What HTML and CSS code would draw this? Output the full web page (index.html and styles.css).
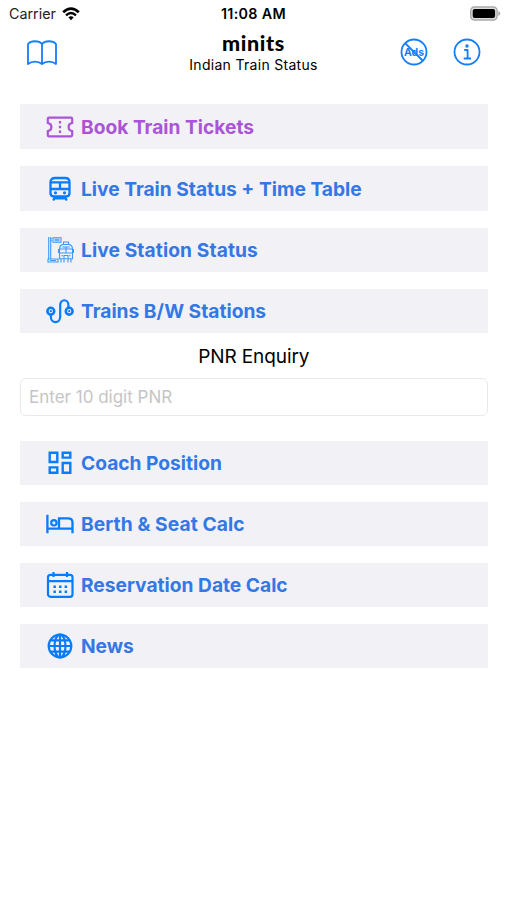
FILE: index.html
```html
<!DOCTYPE html>
<html lang="en">
<head>
  <meta charset="UTF-8" />
  <meta name="viewport" content="width=device-width, initial-scale=1" />
  <title>minits - Indian Train Status</title>
  <link rel="stylesheet" href="styles.css">
</head>
<body>
  <div class="status-bar">
    <div class="carrier">
      <span>Carrier</span>
      <svg class="wifi" viewBox="0 0 18 14">
        <path d="M1.2 5.2 Q9-2 16.8 5.2" fill="none" stroke="#000" stroke-width="2.6"/>
        <path d="M4 8.3 Q9 3.8 14 8.3" fill="none" stroke="#000" stroke-width="2.4"/>
        <path d="M6.3 10.3 Q9 8.2 11.7 10.3 L9 13.2Z"/>
      </svg>
    </div>
    <div class="time">11:08 AM</div>
    <svg class="battery" viewBox="0 0 32 16">
      <rect x="1.7" y="1" width="26.4" height="13" rx="3.8" fill="#ddd" stroke="#aaa" stroke-width="1.4"/>
      <rect x="3.7" y="3" width="22.4" height="9" rx="2"/>
      <path d="M29.3 5 Q31.3 5.8 31.3 7.5 Q31.3 9.2 29.3 10Z" fill="#aaa"/>
    </svg>
  </div>

  <header>
    <svg class="book" viewBox="0 0 32 26">
      <path d="M16 4 C13 .3 5 .3 2 4 V24 C6 20.8 12 20.8 16 24 C20 20.8 26 20.8 30 24 V4 C27 .3 19 .3 16 4 V24"/>
    </svg>
    <div class="title">
      <h1>minits</h1>
      <p>Indian Train Status</p>
    </div>
    <div class="actions">
      <svg viewBox="0 0 28 28">
        <text class="ads" x="14" y="17.7" text-anchor="middle">Ads</text>
        <circle cx="14" cy="14" r="12.5"/>
        <path d="M5 5 L23 23"/>
      </svg>
      <svg viewBox="0 0 28 28">
        <circle cx="14" cy="14" r="12.5"/>
        <circle class="fill" cx="14" cy="8" r="1.7"/>
        <path d="M11.2 12 H14.6 V20.3 M10.7 20.5 H18"/>
      </svg>
    </div>
  </header>

  <main>
    <a class="menu-item tickets">
      <svg viewBox="0 0 28 28">
        <path d="M3 4.7 H25 Q26.2 4.7 26.2 6 V9.8 Q22.6 10.5 22.6 14 Q22.6 17.5 26.2 18.2 V22 Q26.2 23.3 25 23.3 H3 Q1.8 23.3 1.8 22 V18.2 Q5.4 17.5 5.4 14 Q5.4 10.5 1.8 9.8 V6 Q1.8 4.7 3 4.7Z"/>
        <path d="M14 8 v2.6 M14 12.7 v2.6 M14 17.4 v2.6"/>
      </svg>
      <span>Book Train Tickets</span>
    </a>
    <a class="menu-item">
      <svg viewBox="0 0 28 28">
        <path stroke-width="2.3" d="M9 3 H19 Q23.5 3 23.5 7 V18 Q23.5 21.5 20 21.5 H8 Q4.5 21.5 4.5 18 V7 Q4.5 3 9 3Z M5 7.4 H23 M5 14 H23 M14 7 V14 M9 22 L7.2 25.5 M19 22 L20.8 25.5 M8 23.3 H20"/>
        <circle class="fill" cx="9.5" cy="17.8" r="1.6"/>
        <circle class="fill" cx="18.5" cy="17.8" r="1.6"/>
      </svg>
      <span>Live Train Status + Time Table</span>
    </a>
    <a class="menu-item short">
      <svg class="thin" viewBox="0 0 28 28">
        <path d="M2.7 1 V23 M4.7 1 V23 M5 2.8 H6 M5 4.7 H6 M7 1.7 H15 V6.3 H7Z M8.5 3.3 H13.5 M8.5 4.7 H13.5 M2 23 H12 V26 H2Z M4 24.5 H10"/>
        <path d="M16.5 8.5 H23.5 Q26.5 9.5 26.5 13 V22.8 H13.5 V13 Q13.5 9.5 16.5 8.5Z M14 13 H26 M20 11 V17 M14 17 H26 M16.3 11 H23.7 M17.5 8 V6 H22.5 V8 M12.5 13 V17 M27.5 13 V17 M15 22.8 V26.5 M18 23 V26.5 M22 23 V26.5 M25 22.8 V26.5"/>
        <path d="M15.4 19.8 H17 M23 19.8 H24.6 M18 22 V19.5 H22 V22"/>
      </svg>
      <span class="wide">Live Station Status</span>
    </a>
    <a class="menu-item short">
      <svg viewBox="0 0 28 28">
        <circle cx="4.8" cy="14.2" r="3.4" stroke-width="2.6"/>
        <circle cx="23.2" cy="14.2" r="3.4" stroke-width="2.6"/>
        <path stroke-width="2.2" d="M4.8 17.5 V19.5 C4.8 27 14.2 27 14.2 19.5 V8.5 C14.2 1.5 22.4 1.5 22.4 8.5 V10.5"/>
        <circle class="fill" cx="4.8" cy="14.2" r="1.1"/>
        <circle class="fill" cx="23.2" cy="14.2" r="1.1"/>
      </svg>
      <span>Trains B/W Stations</span>
    </a>

    <section class="pnr">
      <label for="pnrInput">PNR Enquiry</label>
      <input type="text" id="pnrInput" placeholder="Enter 10 digit PNR" />
    </section>

    <a class="menu-item short">
      <svg viewBox="0 0 28 28">
        <path stroke-width="2.4" d="M3.7 3.7 H11.3 V13 H3.7Z M16.7 3.7 H24.3 V8.6 H16.7Z M3.7 18.4 H11.3 V23.7 H3.7Z M16.7 14 H24.3 V23.7 H16.7Z"/>
      </svg>
      <span>Coach Position</span>
    </a>
    <a class="menu-item short">
      <svg viewBox="0 0 28 28">
        <path stroke-width="2.3" d="M1.4 4.8 V23.2 M1.4 18.7 H26.6 M13 18.5 V8.4 H22 Q26.5 8.4 26.5 12.5 V23.2"/>
        <circle cx="7.9" cy="12.8" r="2.7"/>
      </svg>
      <span class="wide">Berth &amp; Seat Calc</span>
    </a>
    <a class="menu-item short">
      <svg viewBox="0 0 28 28">
        <rect x="2" y="3.8" width="24.5" height="22" rx="2.5"/>
        <path d="M2 10.2 H26.5 M7.5 1 V6 M21 1 V6"/>
        <path stroke-width="2.4" stroke-dasharray="2.5 3.1" d="M7.4 15.8 H21.3 M7.4 20.8 H21.3"/>
      </svg>
      <span>Reservation Date Calc</span>
    </a>
    <a class="menu-item short">
      <svg viewBox="0 0 28 28">
        <circle cx="14" cy="14" r="11.3"/>
        <ellipse cx="14" cy="14" rx="5.5" ry="11.3"/>
        <path d="M14 2.7 V25.3 M2.7 14 H25.3 M4.5 8.3 H23.5 M4.5 19.7 H23.5"/>
      </svg>
      <span>News</span>
    </a>
  </main>
</body>
</html>
```
FILE: styles.css
```css
* {
  box-sizing: border-box;
}

body {
  margin: 0;
  min-height: 100vh;
  background: #fff;
  color: #000;
  font-family: Inter, sans-serif;
}

.status-bar {
  display: grid;
  grid-template-columns: 1fr auto 1fr;
  align-items: center;
  height: 27px;
  padding: 0 6px 0 9px;
  font-size: 14px;
}

.carrier {
  display: flex;
  align-items: center;
  gap: 6px;
  color: #222;
}

.carrier span {
  font-size: 14.3px;
}

.wifi {
  width: 18px;
  height: 14px;
}

.time {
  margin-right: 3px;
  font-size: 14.3px;
  font-weight: 600;
  letter-spacing: 0.35px;
}

.battery {
  width: 32px;
  height: 16px;
  justify-self: end;
}

header {
  display: grid;
  grid-template-columns: 1fr auto 1fr;
  height: 77px;
  padding: 0 26px;
}

header svg {
  fill: none;
  stroke: #147efb;
  stroke-width: 1.8;
  stroke-linejoin: round;
}

.book {
  width: 32px;
  height: 26px;
  margin-top: 13px;
}

.title {
  padding-top: 4px;
  text-align: center;
}

h1 {
  margin: 0;
  font-family: Lato, sans-serif;
  font-size: 21.5px;
  font-weight: 900;
  letter-spacing: 0.6px;
  line-height: 25px;
}

.title p {
  margin: 0;
  font-size: 14px;
  letter-spacing: 0.3px;
  line-height: 18px;
}

.actions {
  display: flex;
  justify-content: flex-end;
  gap: 25px;
  padding-top: 11px;
}

.actions svg {
  width: 28px;
  height: 28px;
}

header .ads {
  fill: #147efb;
  stroke: none;
  font-size: 10.5px;
  font-weight: 700;
}

header .fill {
  fill: #147efb;
  stroke: none;
}

main {
  display: flex;
  flex-direction: column;
  gap: 17px;
  padding: 0 19.5px 0 20px;
}

.menu-item {
  display: flex;
  align-items: center;
  gap: 7.5px;
  height: 45px;
  padding-left: 25.5px;
  background: #f2f1f6;
  color: #3478e5;
  font-size: 19.2px;
  font-weight: 700;
}

.menu-item.short {
  height: 44px;
}

.menu-item .wide {
  letter-spacing: 0.1px;
}

.menu-item svg {
  width: 28px;
  height: 28px;
  fill: none;
  stroke: #087cfb;
  stroke-width: 2.2;
}

.menu-item .fill {
  fill: #087cfb;
  stroke: none;
}

.menu-item .thin {
  stroke: #3c98fb;
  stroke-width: 1.1;
}

.menu-item.tickets {
  color: #aa55d5;
}

.menu-item.tickets svg {
  stroke: #aa55d5;
}

.pnr {
  margin: -5px 0 8px;
  text-align: center;
}

.pnr label {
  display: block;
  height: 33px;
  font-size: 19px;
  letter-spacing: -0.1px;
  line-height: 23px;
}

.pnr input {
  display: block;
  width: 100%;
  height: 38px;
  padding: 0 8px;
  border: 1px solid #e9e9e9;
  border-radius: 6px;
  background: #fff;
  font-family: inherit;
  font-size: 17px;
}

.pnr input::placeholder {
  color: #c5c5c7;
}
```
